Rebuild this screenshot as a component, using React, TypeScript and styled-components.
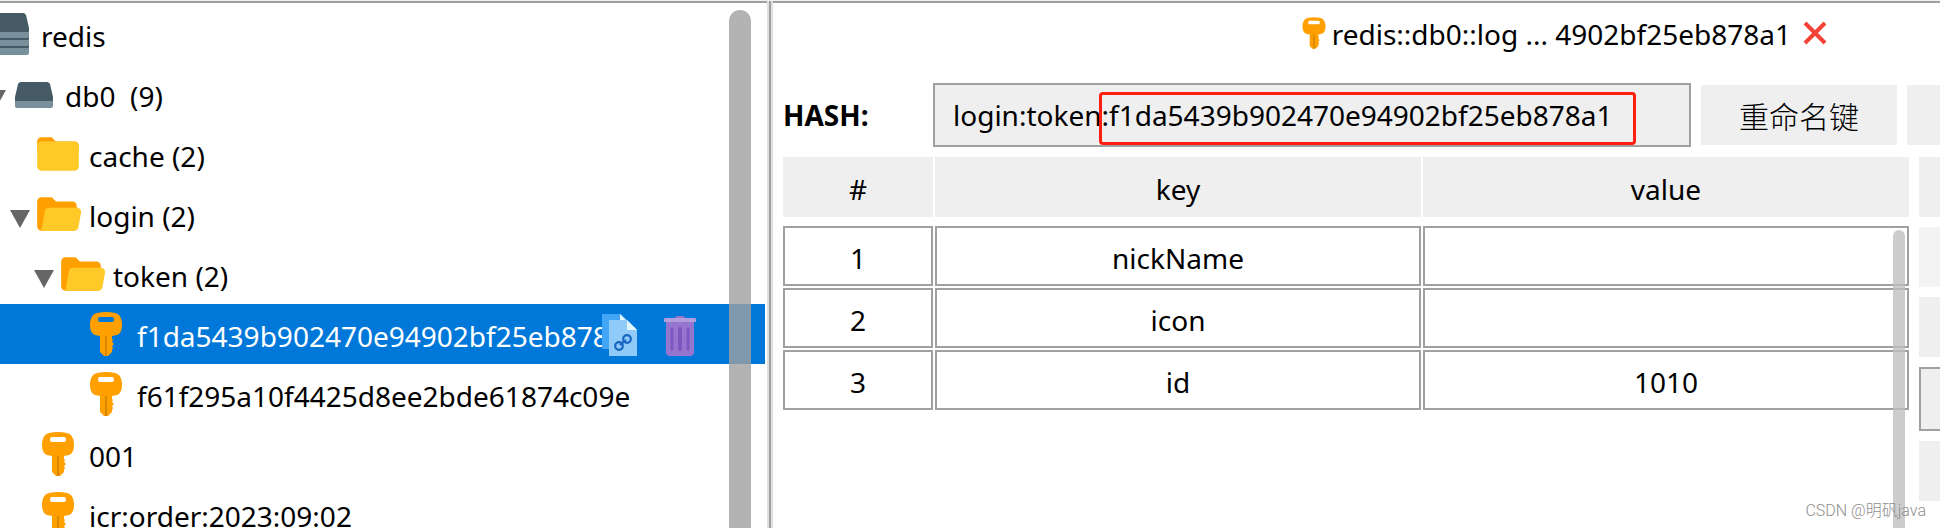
import React from "react";
import styled, { createGlobalStyle, css } from "styled-components";

const GlobalStyle = createGlobalStyle`
  *, *::before, *::after { box-sizing: border-box; }
  body {
    margin: 0;
    background: #fff;
    color: #000;
    font-family: "Noto Sans", "Noto Sans CJK SC", sans-serif;
    font-size: 28px;
  }
  button, input { font: inherit; color: inherit; }
`;

const line = "#a0a0a0";
const face = "#efefef";

const Window = styled.div`
  position: relative;
  display: flex;
  height: 100vh;
  overflow: hidden;
  border-top: 1px solid #f0f0f0;
`;

const Sidebar = styled.nav`
  position: relative;
  flex: 0 0 767px;
  border-top: 2px solid ${line};
  padding: 1px 2px 0 0;
  overflow: hidden;
`;

const Splitter = styled.div`
  flex: 0 0 6px;
  border: solid #e0e0e0;
  border-width: 0 2px;
  background: ${line};
`;

const Tree = styled.ul`
  margin: 0;
  padding: 0;
  list-style: none;
`;

const TreeRow = styled.li<{ $level: number; $selected?: boolean }>`
  position: relative;
  display: flex;
  align-items: center;
  height: 60px;
  white-space: pre;
  ${(p) => p.$selected && css`
    background: #0078d9;
    color: #fff;
  `}
  &::before {
    content: "";
    flex: none;
    width: ${(p) => p.$level * 24}px;
    margin-left: -38px;
  }
`;

const Toggle = styled.span`
  flex: 0 0 23px;
  display: flex;
  padding-top: 10px;
`;

const TreeIcon = styled.span`
  flex: 0 0 50px;
  display: flex;
  margin-right: 6px;
`;

const TreeLabel = styled.span`
  padding-top: 4px;
  line-height: 56px;
`;

const RowActions = styled.div`
  position: absolute;
  top: 9px;
  right: 69px;
  display: flex;
  gap: 26px;
`;

const IconButton = styled.button`
  display: flex;
  padding: 0;
  border: 0;
  background: none;
`;

const ScrollThumb = styled.div<{ $side?: "tree" | "table" }>`
  position: absolute;
  bottom: -20px;
  border-radius: 11px;
  ${(p) =>
    p.$side === "tree"
      ? css`
          top: 7px;
          right: 16px;
          width: 22px;
          background: rgba(160, 160, 160, 0.8);
        `
      : css`
          top: 4px;
          right: 4px;
          width: 12px;
          background: rgba(191, 191, 191, 0.78);
        `}
`;

const Workspace = styled.main`
  flex: 1;
  min-width: 0;
  display: flex;
  flex-direction: column;
  border-top: 2px solid ${line};
  padding-left: 10px;
`;

const TabBar = styled.header`
  display: flex;
  justify-content: flex-end;
  align-items: center;
  height: 60px;
  margin-bottom: 20px;
  padding-right: 113px;
`;

const Tab = styled.div`
  display: flex;
  align-items: center;
`;

const TabTitle = styled.span`
  margin-right: 12px;
  padding-top: 2px;
  line-height: 58px;
`;

const Toolbar = styled.div`
  display: flex;
  align-items: center;
  margin-bottom: 10px;
`;

const TypeLabel = styled.label`
  flex: 0 0 150px;
  font-weight: 700;
  line-height: 60px;
`;

const KeyField = styled.div`
  position: relative;
  flex: 1;
  min-width: 0;
  margin-right: 10px;
`;

const KeyInput = styled.input`
  display: block;
  width: 100%;
  height: 64px;
  padding: 0 18px;
  border: 2px solid ${line};
  border-radius: 0;
  background: ${face};
  outline: 0;
`;

const Highlight = styled.div`
  position: absolute;
  top: 9px;
  left: 166px;
  width: 537px;
  height: 53px;
  border: 3px solid #ff1e10;
  border-radius: 4px;
`;

const FlatButton = styled.button<{ $outlined?: boolean; $dim?: boolean }>`
  display: block;
  flex: none;
  width: 196px;
  height: ${(p) => (p.$outlined ? 64 : 60)}px;
  padding: 0;
  border: ${(p) => (p.$outlined ? `2px solid ${line}` : "0")};
  background: ${(p) => (p.$dim ? "#f3f3f3" : face)};
  font-family: "Noto Sans CJK SC", sans-serif;
  font-size: 30px;
  font-weight: 300;
`;

const ClippedSlot = styled.div`
  flex: 0 0 33px;
  margin-left: 10px;
  overflow: hidden;
`;

const Content = styled.div`
  flex: 1;
  min-height: 0;
  display: flex;
  gap: 10px;
`;

const TableArea = styled.div`
  position: relative;
  flex: 1;
  min-width: 0;
  display: flex;
  flex-direction: column;
`;

const DataTable = styled.table`
  display: grid;
  gap: 9px;

  tbody { display: grid; gap: 2px; }
  thead { display: block; }
  tr {
    display: grid;
    grid-template-columns: 150px 1fr 1fr;
    gap: 2px;
  }
`;

const HeadCell = styled.th`
  height: 60px;
  padding: 4px 0 0;
  background: ${face};
  font-weight: 400;
  line-height: 56px;
  text-align: center;
`;

const Cell = styled.td`
  height: 60px;
  padding: 2px 0 0;
  border: 2px solid ${line};
  line-height: 56px;
  text-align: center;
`;

const TableScroll = styled.div`
  position: absolute;
  top: 69px;
  right: 0;
  bottom: 0;
  width: 20px;
  overflow: hidden;
`;

const ActionColumn = styled.aside`
  flex: 0 0 21px;
  display: flex;
  flex-direction: column;
  gap: 10px;
  overflow: hidden;
`;

const Watermark = styled.div`
  position: absolute;
  right: 14px;
  bottom: 5px;
  color: #8e8e8e;
  font-family: Roboto, "Noto Sans CJK SC", sans-serif;
  font-size: 16px;
  font-weight: 300;
  line-height: 24px;
`;

const Arrow = () => (
  <svg width="20" height="18" viewBox="0 0 20 18" aria-hidden="true">
    <path d="M0 0H20L10 18Z" fill="#666" />
  </svg>
);

const ServerIcon = () => (
  <svg width="50" height="50" viewBox="0 0 50 50" aria-hidden="true">
    <path d="M6 22H44V44Q44 46 42 46H8Q6 46 6 44Z" fill="#78909c" />
    <path d="M6 28Q7 29 8 29H42Q44 29 44 28V30Q43 31 42 31H8Q6 31 6 30ZM6 36Q7 37 8 37H42Q44 37 44 36V38Q43 39 42 39H8Q6 39 6 38Z" fill="#455a64" />
    <path d="M12 4H38Q40 4 41 6L44 19V23H6V19L9 6Q10 4 12 4Z" fill="#455a64" />
  </svg>
);

const DatabaseIcon = () => (
  <svg width="50" height="50" viewBox="0 0 50 50" aria-hidden="true">
    <path d="M6 31H44V37Q44 39 42 39H8Q6 39 6 37Z" fill="#78909c" />
    <path d="M12 13H38Q40 13 41 15L44 28V32H6V28L9 15Q10 13 12 13Z" fill="#455a64" />
  </svg>
);

const FolderIcon = ({ open }: { open?: boolean }) => (
  <svg width="50" height="50" viewBox="0 0 48 48" aria-hidden="true">
    {open ? (
      <>
        <path d="M38 12H22l-4-4H8c-2.200 0-4 1.800-4 4v24c0 2.200 1.800 4 4 4h31c1.700 0 3-1.300 3-3V16c0-2.200-1.800-4-4-4z" fill="#ffa000" />
        <path d="M42.200 18H15.300c-1.900 0-3.600 1.400-3.900 3.300L8 40h31.700c1.900 0 3.600-1.400 3.900-3.300l2.500-14c.5-2.400-1.400-4.700-3.900-4.700z" fill="#ffca28" />
      </>
    ) : (
      <>
        <path d="M40 12H22l-4-4H8c-2.200 0-4 1.800-4 4v8h40v-4c0-2.200-1.800-4-4-4z" fill="#ffa000" />
        <path d="M40 12H8c-2.200 0-4 1.800-4 4v20c0 2.200 1.800 4 4 4h32c2.200 0 4-1.800 4-4V16c0-2.200-1.800-4-4-4z" fill="#ffca28" />
      </>
    )}
  </svg>
);

const KeyIcon = ({ size = 50 }: { size?: number }) => (
  <svg width={size} height={size} viewBox="0 0 50 50" aria-hidden="true">
    <path
      fillRule="evenodd"
      d="M16 4Q25 2 34 4Q40 5 41 14V16Q41 24 36 26L31 27V30L32 31L31 33L33 35L31 37L32 39L31 41V43L27 47H23L19 43V27L14 26Q9 24 9 16V14Q10 5 16 4ZM19 8Q17 8 17 10V11Q17 13 19 13H31Q33 13 33 11V10Q33 8 31 8Z"
      fill="#ffa000"
    />
    <path d="M24 27H26V47H24Z" fill="#d68600" />
  </svg>
);

const CopyIcon = () => (
  <svg width="36" height="44" viewBox="0 0 36 44" aria-hidden="true">
    <path d="M0 1H19L26 8V36H0Z" fill="#42a5f5" />
    <path d="M18 1L26 9H18Z" fill="#e1f5fe" />
    <path d="M7 7H25L35 17V43H7Z" fill="#90caf9" />
    <path d="M25 7L35 17H25Z" fill="#e1f5fe" />
    <g fill="none" stroke="#1565c0" strokeWidth="2.2">
      <circle cx="25" cy="26" r="3.800" />
      <circle cx="17" cy="33" r="3.800" />
      <path d="M18 32L24 27" />
    </g>
  </svg>
);

const TrashIcon = () => (
  <svg width="32" height="44" viewBox="0 0 32 44" aria-hidden="true">
    <path d="M11 5Q11 3 13 3H19Q21 3 21 5V7H11Z" fill="#9575cd" />
    <path d="M2 8H30V39Q30 43 26 43H6Q2 43 2 39Z" fill="#9575cd" />
    <path d="M1 5H31Q32 5 32 7V9H0V7Q0 5 1 5Z" fill="#b39ddb" />
    <path d="M8 16V36M24 16V36" stroke="#7e57c2" strokeWidth="3" strokeLinecap="round" />
    <path d="M16 16V36" stroke="#7e57c2" strokeWidth="4" strokeLinecap="round" />
  </svg>
);

const CloseIcon = () => (
  <svg width="24" height="24" viewBox="0 0 24 24" aria-hidden="true">
    <path d="M2 2L22 22M22 2L2 22" stroke="#f44336" strokeWidth="4" />
  </svg>
);

type Kind = "server" | "database" | "folder" | "open" | "key";
type Node = { label: string; level: number; kind: Kind; expanded?: boolean; selected?: boolean };

const nodes: Node[] = [
  { label: "redis", level: 0, kind: "server" },
  { label: "db0  (9)", level: 1, kind: "database", expanded: true },
  { label: "cache (2)", level: 2, kind: "folder" },
  { label: "login (2)", level: 2, kind: "open", expanded: true },
  { label: "token (2)", level: 3, kind: "open", expanded: true },
  { label: "f1da5439b902470e94902bf25eb878a1", level: 4, kind: "key", selected: true },
  { label: "f61f295a10f4425d8ee2bde61874c09e", level: 4, kind: "key" },
  { label: "001", level: 2, kind: "key" },
  { label: "icr:order:2023:09:02", level: 2, kind: "key" },
];

const icons: Record<Kind, React.ReactNode> = {
  server: <ServerIcon />,
  database: <DatabaseIcon />,
  folder: <FolderIcon />,
  open: <FolderIcon open />,
  key: <KeyIcon />,
};

const fields = [
  ["1", "nickName", ""],
  ["2", "icon", ""],
  ["3", "id", "1010"],
];

export default function App() {
  return (
    <>
      <GlobalStyle />
      <Window>
        <Sidebar>
          <Tree>
            {nodes.map((n) => (
              <TreeRow key={n.label} $level={n.level} $selected={n.selected}>
                <Toggle>{n.expanded && <Arrow />}</Toggle>
                <TreeIcon>{icons[n.kind]}</TreeIcon>
                <TreeLabel>{n.label}</TreeLabel>
                {n.selected && (
                  <RowActions>
                    <IconButton aria-label="Copy"><CopyIcon /></IconButton>
                    <IconButton aria-label="Delete"><TrashIcon /></IconButton>
                  </RowActions>
                )}
              </TreeRow>
            ))}
          </Tree>
          <ScrollThumb $side="tree" />
        </Sidebar>
        <Splitter />
        <Workspace>
          <TabBar>
            <Tab>
              <KeyIcon size={36} />
              <TabTitle>redis::db0::log ... 4902bf25eb878a1</TabTitle>
              <IconButton aria-label="Close"><CloseIcon /></IconButton>
            </Tab>
          </TabBar>
          <Toolbar>
            <TypeLabel htmlFor="key-name">HASH:</TypeLabel>
            <KeyField>
              <KeyInput id="key-name" readOnly value="login:token:f1da5439b902470e94902bf25eb878a1" />
              <Highlight />
            </KeyField>
            <FlatButton>重命名键</FlatButton>
            <ClippedSlot><FlatButton aria-label="TTL" /></ClippedSlot>
          </Toolbar>
          <Content>
            <TableArea>
              <DataTable>
                <thead>
                  <tr>
                    <HeadCell>#</HeadCell>
                    <HeadCell>key</HeadCell>
                    <HeadCell>value</HeadCell>
                  </tr>
                </thead>
                <tbody>
                  {fields.map((row) => (
                    <tr key={row[0]}>
                      {row.map((value, i) => (
                        <Cell key={i}>{value}</Cell>
                      ))}
                    </tr>
                  ))}
                </tbody>
              </DataTable>
              <TableScroll><ScrollThumb $side="table" /></TableScroll>
            </TableArea>
            <ActionColumn>
              <FlatButton aria-label="Add row" />
              <FlatButton aria-label="Delete row" $dim />
              <FlatButton aria-label="Reload" />
              <FlatButton aria-label="Search" $outlined />
              <FlatButton aria-label="Next page" />
            </ActionColumn>
          </Content>
        </Workspace>
        <Watermark>CSDN @明矾java</Watermark>
      </Window>
    </>
  );
}
